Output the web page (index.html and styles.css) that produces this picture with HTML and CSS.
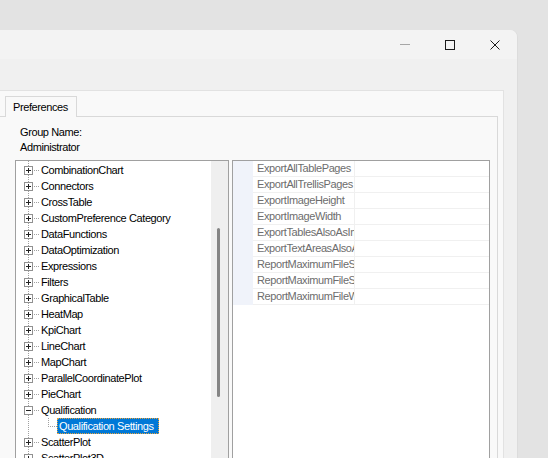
FILE: index.html
```html
<!DOCTYPE html>
<html lang="en">
<head>
  <meta charset="UTF-8" />
  <title>Preferences</title>
  <link rel="stylesheet" href="styles.css">
</head>
<body>
  <div class="desktop">
    <div class="window">
      <div class="titlebar">
        <div class="cap-btn cap-min"><span class="min-line"></span></div>
        <div class="cap-btn cap-max"><span class="max-box"></span></div>
        <div class="cap-btn cap-close">
          <svg width="10" height="10" viewBox="0 0 10 10">
            <path d="M0.5 0.5 L9.5 9.5 M9.5 0.5 L0.5 9.5" stroke="#1a1a1a" stroke-width="1" fill="none" />
          </svg>
        </div>
      </div>

      <div class="panel">
        <div class="tabstrip">
          <div class="tab-lead"></div>
          <div class="tab">Preferences</div>
          <div class="tab-fill"></div>
        </div>
        <div class="tab-page">
          <div class="group-label">Group Name:</div>
          <div class="group-value">Administrator</div>

          <div class="split">
            <div class="tree">
              <div class="tree-list">
                <div class="node"><span class="box plus"></span><span class="hook"></span><span class="label">CombinationChart</span></div>
                <div class="node"><span class="box plus"></span><span class="hook"></span><span class="label">Connectors</span></div>
                <div class="node"><span class="box plus"></span><span class="hook"></span><span class="label">CrossTable</span></div>
                <div class="node"><span class="box plus"></span><span class="hook"></span><span class="label">CustomPreference Category</span></div>
                <div class="node"><span class="box plus"></span><span class="hook"></span><span class="label">DataFunctions</span></div>
                <div class="node"><span class="box plus"></span><span class="hook"></span><span class="label">DataOptimization</span></div>
                <div class="node"><span class="box plus"></span><span class="hook"></span><span class="label">Expressions</span></div>
                <div class="node"><span class="box plus"></span><span class="hook"></span><span class="label">Filters</span></div>
                <div class="node"><span class="box plus"></span><span class="hook"></span><span class="label">GraphicalTable</span></div>
                <div class="node"><span class="box plus"></span><span class="hook"></span><span class="label">HeatMap</span></div>
                <div class="node"><span class="box plus"></span><span class="hook"></span><span class="label">KpiChart</span></div>
                <div class="node"><span class="box plus"></span><span class="hook"></span><span class="label">LineChart</span></div>
                <div class="node"><span class="box plus"></span><span class="hook"></span><span class="label">MapChart</span></div>
                <div class="node"><span class="box plus"></span><span class="hook"></span><span class="label">ParallelCoordinatePlot</span></div>
                <div class="node"><span class="box plus"></span><span class="hook"></span><span class="label">PieChart</span></div>
                <div class="node"><span class="box minus"></span><span class="hook"></span><span class="label">Qualification</span></div>
                <div class="node child"><span class="elbow"></span><span class="label selected">Qualification Settings</span></div>
                <div class="node"><span class="box plus"></span><span class="hook"></span><span class="label">ScatterPlot</span></div>
                <div class="node"><span class="box plus"></span><span class="hook"></span><span class="label">ScatterPlot3D</span></div>
              </div>
              <div class="scroll-track"><div class="scroll-thumb"></div></div>
            </div>

            <div class="props">
              <div class="prop-row"><span class="prop-margin"></span><span class="prop-name">ExportAllTablePages</span><span class="prop-value"></span></div>
              <div class="prop-row"><span class="prop-margin"></span><span class="prop-name">ExportAllTrellisPages</span><span class="prop-value"></span></div>
              <div class="prop-row"><span class="prop-margin"></span><span class="prop-name">ExportImageHeight</span><span class="prop-value"></span></div>
              <div class="prop-row"><span class="prop-margin"></span><span class="prop-name">ExportImageWidth</span><span class="prop-value"></span></div>
              <div class="prop-row"><span class="prop-margin"></span><span class="prop-name">ExportTablesAlsoAsImages</span><span class="prop-value"></span></div>
              <div class="prop-row"><span class="prop-margin"></span><span class="prop-name">ExportTextAreasAlsoAsImages</span><span class="prop-value"></span></div>
              <div class="prop-row"><span class="prop-margin"></span><span class="prop-name">ReportMaximumFileSize</span><span class="prop-value"></span></div>
              <div class="prop-row"><span class="prop-margin"></span><span class="prop-name">ReportMaximumFileSizeUnit</span><span class="prop-value"></span></div>
              <div class="prop-row"><span class="prop-margin"></span><span class="prop-name">ReportMaximumFileWarning</span><span class="prop-value"></span></div>
            </div>
          </div>
        </div>
      </div>
    </div>
  </div>
</body>
</html>
```

FILE: styles.css
```css
body {
  margin: 0;
  font-family: 'Liberation Sans', Arial, sans-serif;
  font-size: 11px;
  letter-spacing: -0.4px;
  color: #000;
}
.desktop {
  background: #e3e3e3;
  height: 458px;
  padding-top: 30px;
  box-sizing: border-box;
  overflow: hidden;
}
.window {
  width: 517px;
  height: 428px;
  background: #f0f0f0;
  border-top-right-radius: 7px;
  overflow: hidden;
  box-shadow: 1px 0 0 #dcdcdc;
}
.titlebar {
  height: 29px;
  background: #f3f3f3;
  display: flex;
  justify-content: flex-end;
}
.cap-btn {
  height: 29px;
  display: flex;
  align-items: center;
  justify-content: center;
}
.cap-min { width: 45px; }
.cap-max { width: 46px; }
.cap-close { width: 44px; }
.min-line {
  width: 10px;
  height: 1px;
  background: #a6a6a6;
}
.max-box {
  width: 10px;
  height: 10px;
  border: 1px solid #1a1a1a;
  box-sizing: border-box;
}
.panel {
  margin: 31px 13px 0 0;
  height: 400px;
  background: #f9f9f9;
  border-top: 1px solid #e2e2e2;
  border-right: 1px solid #e2e2e2;
  padding: 5px 5px 0 0;
}
.tabstrip {
  display: flex;
  height: 21px;
}
.tab-lead {
  width: 5px;
  border-bottom: 1px solid #d9d9d9;
}
.tab-fill {
  flex: 1;
  border-bottom: 1px solid #d9d9d9;
}
.tab {
  width: 72px;
  border: 1px solid #d9d9d9;
  border-bottom: none;
  background: #f9f9f9;
  padding-left: 7px;
  box-sizing: border-box;
  line-height: 20px;
}
.tab-page {
  border-right: 1px solid #d9d9d9;
  height: 360px;
  background: #f9f9f9;
  padding-top: 8px;
}
.group-label, .group-value {
  padding-left: 20px;
  line-height: 15px;
}
.split {
  display: flex;
  margin: 5px 0 0 15px;
  gap: 3px;
}
.tree {
  width: 214px;
  height: 320px;
  border: 1px solid #a0a0a0;
  box-sizing: border-box;
  background: #fff;
  display: flex;
}
.tree-list {
  flex: 1;
  padding-top: 1px;
  background: repeating-linear-gradient(to bottom, #a0a0a0 0 1px, transparent 1px 2px) 12px 0 / 1px 100% no-repeat;
  overflow: hidden;
}
.node {
  height: 16px;
  display: flex;
  align-items: center;
  white-space: nowrap;
}
.box {
  width: 9px;
  height: 9px;
  margin-left: 8px;
  border: 1px solid #919191;
  box-sizing: border-box;
  flex: none;
}
.box.plus {
  background:
    linear-gradient(#222, #222) center / 5px 1px no-repeat,
    linear-gradient(#222, #222) center / 1px 5px no-repeat,
    #fff;
}
.box.minus {
  background:
    linear-gradient(#222, #222) center / 5px 1px no-repeat,
    #fff;
}
.hook {
  width: 6px;
  height: 1px;
  flex: none;
  background: repeating-linear-gradient(to right, transparent 0 1px, #a0a0a0 1px 2px);
}
.label {
  padding: 0 2px;
  line-height: 16px;
}
.child {
  align-items: stretch;
}
.elbow {
  width: 9px;
  margin-left: 32px;
  flex: none;
  background:
    repeating-linear-gradient(to bottom, #a0a0a0 0 1px, transparent 1px 2px) 0 0 / 1px 8px no-repeat,
    repeating-linear-gradient(to right, #a0a0a0 0 1px, transparent 1px 2px) 0 8px / 9px 1px no-repeat;
}
.label.selected {
  background: #0078d7;
  color: #fff;
  outline: 1px dotted #e8a33c;
  outline-offset: -1px;
  padding: 0 5px 0 2px;
}
.scroll-track {
  width: 17px;
  background: #efefef;
  flex: none;
}
.scroll-thumb {
  width: 3px;
  height: 169px;
  margin: 67px 0 0 6px;
  background: #858585;
  border-radius: 2px;
}
.props {
  width: 258px;
  height: 320px;
  border: 1px solid #a0a0a0;
  box-sizing: border-box;
  background: #fff;
}
.prop-row {
  display: flex;
  height: 16px;
}
.prop-margin {
  width: 20px;
  background: #f0f3fa;
  flex: none;
}
.prop-name {
  width: 102px;
  flex: none;
  padding-left: 4px;
  box-sizing: border-box;
  color: #6d6d6d;
  line-height: 15px;
  white-space: nowrap;
  overflow: hidden;
  border-right: 1px solid #f0f0f0;
  border-bottom: 1px solid #f0f0f0;
}
.prop-value {
  flex: 1;
  border-bottom: 1px solid #f0f0f0;
}
```
